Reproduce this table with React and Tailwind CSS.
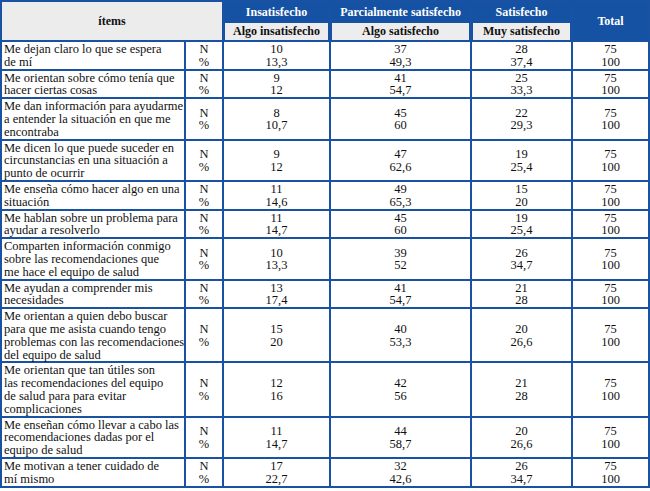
import React from "react";

const rows = [
  { text: ["Me dejan claro lo que se espera", "de mí"], v: [["10", "13,3"], ["37", "49,3"], ["28", "37,4"]] },
  { text: ["Me orientan sobre cómo tenía que", "hacer ciertas cosas"], v: [["9", "12"], ["41", "54,7"], ["25", "33,3"]] },
  { text: ["Me dan información para ayudarme", "a entender la situación en que me", "encontraba"], v: [["8", "10,7"], ["45", "60"], ["22", "29,3"]] },
  { text: ["Me dicen lo que puede suceder en", "circunstancias en una situación a", "punto de ocurrir"], v: [["9", "12"], ["47", "62,6"], ["19", "25,4"]] },
  { text: ["Me enseña cómo hacer algo en una", "situación"], v: [["11", "14,6"], ["49", "65,3"], ["15", "20"]] },
  { text: ["Me hablan sobre un problema para", "ayudar a resolverlo"], v: [["11", "14,7"], ["45", "60"], ["19", "25,4"]] },
  { text: ["Comparten información conmigo", "sobre las recomendaciones que", "me hace el equipo de salud"], v: [["10", "13,3"], ["39", "52"], ["26", "34,7"]] },
  { text: ["Me ayudan a comprender mis", "necesidades"], v: [["13", "17,4"], ["41", "54,7"], ["21", "28"]] },
  { text: ["Me orientan a quien debo buscar", "para que me asista cuando tengo", "problemas con las recomendaciones", "del equipo de salud"], v: [["15", "20"], ["40", "53,3"], ["20", "26,6"]] },
  { text: ["Me orientan que tan útiles son", "las recomendaciones del equipo", "de salud para para evitar", "complicaciones"], v: [["12", "16"], ["42", "56"], ["21", "28"]] },
  { text: ["Me enseñan cómo llevar a cabo las", "recomendaciones dadas por el", "equipo de salud"], v: [["11", "14,7"], ["44", "58,7"], ["20", "26,6"]] },
  { text: ["Me motivan a tener cuidado de", "mí mismo"], v: [["17", "22,7"], ["32", "42,6"], ["26", "34,7"]] },
];

const cell = "border-2 border-[#1a52a3] align-middle pt-[1px] pb-0";

function Pair({ a, b }) {
  return (
    <div className="text-center leading-[12.8px]">
      <div>{a}</div>
      <div>{b}</div>
    </div>
  );
}

export default function App() {
  return (
    <div className="w-[650px] h-[491px] bg-white text-[#111]">
      <table className="table-fixed border-collapse w-[648px] text-[12.5px] [font-family:Liberation_Serif,Times_New_Roman,DejaVu_Serif,serif]">
        <colgroup>
          <col className="w-[184px]" />
          <col className="w-[38px]" />
          <col className="w-[107px]" />
          <col className="w-[141px]" />
          <col className="w-[101px]" />
          <col className="w-[77px]" />
        </colgroup>
        <thead>
          <tr className="h-[20px]">
            <th colSpan={2} rowSpan={2} className="border-2 border-[#1a52a3] bg-[#ececec] text-[12px] font-bold text-center align-middle">
              ítems
            </th>
            <th className="border-2 border-b-0 border-[#1a52a3] bg-[#1552a3] text-white text-[12px] font-bold leading-[16px]">Insatisfecho</th>
            <th className="border-2 border-b-0 border-[#1a52a3] bg-[#1552a3] text-white text-[12px] font-bold leading-[16px]">Parcialmente satisfecho</th>
            <th className="border-2 border-b-0 border-[#1a52a3] bg-[#1552a3] text-white text-[12px] font-bold leading-[16px]">Satisfecho</th>
            <th rowSpan={2} className="border-2 border-[#1a52a3] bg-[#1552a3] text-white text-[12px] font-bold align-middle">Total</th>
          </tr>
          <tr className="h-[20px]">
            {["Algo insatisfecho", "Algo satisfecho", "Muy satisfecho"].map((t) => (
              <th key={t} className="border-2 border-t-0 border-[#1a52a3] bg-[#1552a3] p-0">
                <div className="mx-[1px] mt-[1px] bg-[#ededed] h-[17px] leading-[17px] text-[12px] font-bold text-center">{t}</div>
              </th>
            ))}
          </tr>
        </thead>
        <tbody>
          {rows.map((r, i) => (
            <tr key={i}>
              <td className={cell + " pl-[2px]"}>
                <div className="leading-[12.8px]">
                  {r.text.map((l, j) => (
                    <div key={j} className="whitespace-nowrap">{l}</div>
                  ))}
                </div>
              </td>
              <td className={cell}>
                <Pair a="N" b="%" />
              </td>
              {r.v.map((p, j) => (
                <td key={j} className={cell}>
                  <Pair a={p[0]} b={p[1]} />
                </td>
              ))}
              <td className={cell}>
                <Pair a="75" b="100" />
              </td>
            </tr>
          ))}
        </tbody>
      </table>
    </div>
  );
}
